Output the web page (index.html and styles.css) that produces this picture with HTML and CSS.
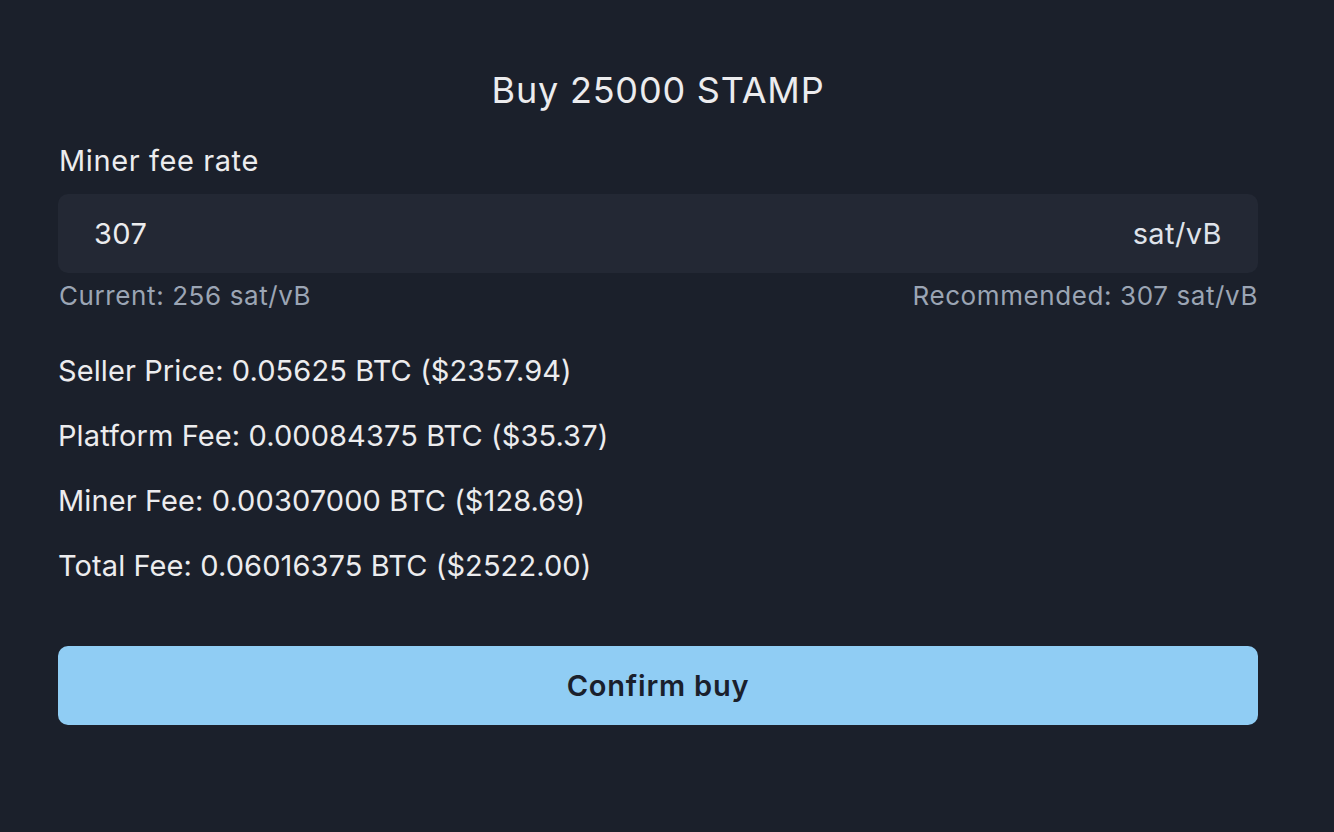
FILE: index.html
```html
<!DOCTYPE html>
<html lang="en">
<head>
<meta charset="utf-8">
<title>Buy 25000 STAMP</title>
<link rel="stylesheet" href="styles.css">
</head>
<body>
<div class="modal">
  <h1 class="title">Buy 25000 STAMP</h1>
  <label class="label" for="fee">Miner fee rate</label>
  <div class="input-group">
    <input id="fee" class="input" type="text" value="307">
    <span class="addon">sat/vB</span>
  </div>
  <div class="helper">
    <span>Current: 256 sat/vB</span>
    <span>Recommended: 307 sat/vB</span>
  </div>
  <div class="rows">
    <p class="row">Seller Price: 0.05625 BTC ($2357.94)</p>
    <p class="row">Platform Fee: 0.00084375 BTC ($35.37)</p>
    <p class="row">Miner Fee: 0.00307000 BTC ($128.69)</p>
    <p class="row">Total Fee: 0.06016375 BTC ($2522.00)</p>
  </div>
  <button class="btn" type="button">Confirm buy</button>
</div>
</body>
</html>
```

FILE: styles.css
```css
* { box-sizing: border-box; }
html, body {
  margin: 0;
  height: 100%;
  background: #1b202b;
}
body {
  font-family: Inter, "Noto Sans", sans-serif;
  color: #ececee;
}
.modal {
  width: 1200px;
  margin-left: 58px;
  padding-top: 69px;
  display: flex;
  flex-direction: column;
}
.title {
  margin: 0;
  font-size: 36px;
  font-weight: 400;
  line-height: 42px;
  letter-spacing: 0.8px;
  text-align: center;
}
.label {
  margin-top: 32px;
  font-size: 29px;
  line-height: 36px;
  letter-spacing: 0.6px;
  padding-left: 1px;
}
.input-group {
  margin-top: 15px;
  height: 79px;
  background: #232834;
  border-radius: 10px;
  display: flex;
  align-items: center;
  padding: 0 36px 0 36px;
}
.input {
  flex: 1;
  min-width: 0;
  background: transparent;
  border: 0;
  outline: none;
  color: #ececee;
  font: inherit;
  font-size: 29px;
  letter-spacing: 0.4px;
  padding: 0;
}
.addon {
  font-size: 29px;
  letter-spacing: 0.4px;
  color: #dfe3ea;
}
.helper {
  margin-top: 8px;
  display: flex;
  justify-content: space-between;
  font-size: 26px;
  line-height: 30px;
  letter-spacing: 0.6px;
  color: #9ba5b4;
  padding-left: 1px;
}
.rows {
  margin-top: 42px;
  display: flex;
  flex-direction: column;
  gap: 29px;
}
.row {
  margin: 0;
  font-size: 29px;
  line-height: 36px;
  letter-spacing: 0.1px;
}
.btn {
  margin-top: 62px;
  height: 79px;
  border: 0;
  border-radius: 10px;
  background: #90cdf4;
  color: #1a202c;
  font: inherit;
  font-size: 29px;
  font-weight: 600;
  letter-spacing: 0.8px;
  cursor: pointer;
}
```
